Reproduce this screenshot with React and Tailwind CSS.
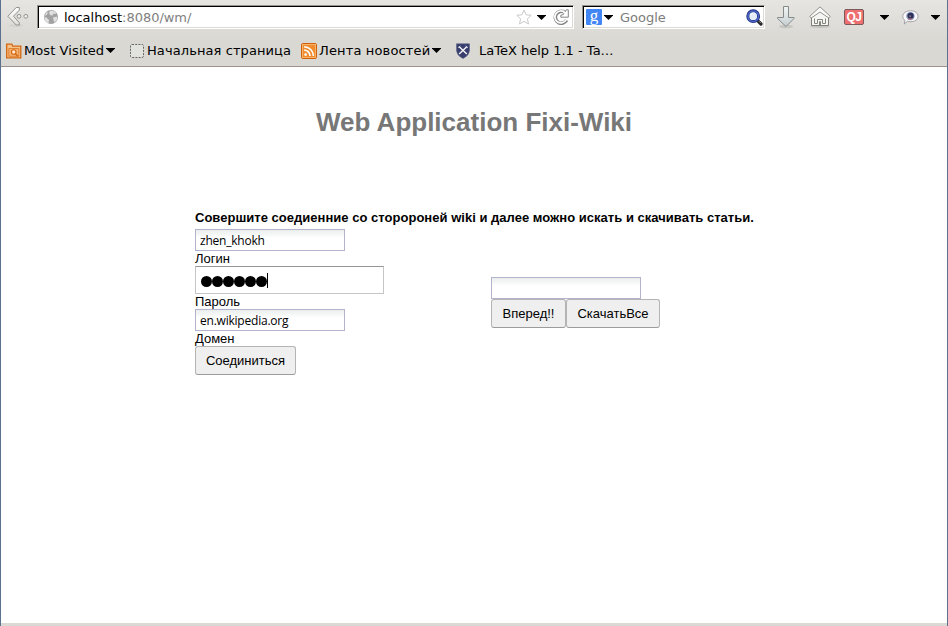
const Back = () => (
  <svg width="24" height="22" viewBox="0 0 24 22" className="shrink-0">
    <defs>
      <linearGradient id="back" x1="0" y1="0" x2="0" y2="1">
        <stop offset="0" stopColor="#fff" />
        <stop offset="1" stopColor="#ddddda" />
      </linearGradient>
    </defs>
    <ellipse cx="10" cy="19.5" rx="7" ry="1.5" fill="#cbcbc6" opacity=".6" />
    <path d="M1.8 10.2 10.2 1.5H13.3V4.2L7.5 10.2 13.3 16.6V19H10.2Z" fill="url(#back)" stroke="#92928f" strokeLinejoin="round" />
    <circle cx="13" cy="10.3" r="1.9" fill="#eee" stroke="#92928f" />
    <circle cx="19.8" cy="10.3" r="1.9" fill="#eee" stroke="#92928f" />
  </svg>
);

const Globe = () => (
  <svg width="16" height="16" viewBox="0 0 16 16" className="shrink-0">
    <circle cx="8" cy="8" r="7" fill="#a2a2a2" />
    <path d="M7 1.5 12.5 2.8 13 5 10.5 4.5 9.5 6.5 7.5 6.3 6 4.2Z M1.3 8 3.5 8.5 6 11 5.5 14.4 2.5 12.3Z M10 8.5 14 7.5 14.3 10.5 11.5 13.5 10.5 11Z M3.2 3.5 5 3.2 3.7 6 2 6.4Z" fill="#e0e0e0" />
  </svg>
);

const Star = () => (
  <svg width="16" height="16" viewBox="0 0 16 16" className="shrink-0">
    <path d="M8 1 10.1 5.8 15.2 6.3 11.4 9.8 12.5 15 8 12.3 3.5 15 4.6 9.8.8 6.3 5.9 5.8Z" fill="#fff" stroke="#cacaca" />
  </svg>
);

const Reload = () => (
  <svg width="16" height="16" viewBox="0 0 16 16" fill="none" className="shrink-0">
    <path d="M13.6 11.2A6 6 0 1 1 11.6 3.2" stroke="#858585" strokeWidth="3.6" />
    <path d="M13.1 10.9A6 6 0 1 1 11.6 3.2" stroke="#fff" strokeWidth="1.7" />
    <path d="M15.3.8V8.2H7.8V6.2L10.3 5.6 13.3.8Z" fill="#fff" stroke="#858585" />
    <path d="M10.5 3 12.8 4.4" stroke="#fff" strokeWidth="1.7" />
  </svg>
);

const Caret = () => (
  <svg width="9" height="5" viewBox="0 0 9 5" className="shrink-0">
    <path d="M0 0H9V.6L4.5 5 0 .6Z" fill="#000" />
  </svg>
);

const Lens = () => (
  <svg width="17" height="17" viewBox="0 0 17 17" className="shrink-0">
    <path d="M11 11 15 15" stroke="#28282c" strokeWidth="3.2" strokeLinecap="round" />
    <path d="M13 12.2 14.6 13.8" stroke="#999" strokeWidth="1" />
    <circle cx="7.2" cy="7.2" r="5.4" fill="#e3edf9" stroke="#20307f" strokeWidth="3" />
    <circle cx="7.2" cy="7.2" r="5.3" fill="none" stroke="#4c68c8" strokeWidth="1.5" />
    <path d="M4.5 6.5A3 3 0 0 1 8.5 4.3" stroke="#fff" fill="none" />
  </svg>
);

const Download = () => (
  <svg width="20" height="24" viewBox="0 0 20 24" className="shrink-0">
    <defs>
      <linearGradient id="down" x1="0" y1="0" x2="0" y2="1">
        <stop offset="0" stopColor="#f2f4f3" />
        <stop offset="1" stopColor="#c5ced0" />
      </linearGradient>
    </defs>
    <ellipse cx="10" cy="21.5" rx="7" ry="1.8" fill="#b8b8b3" opacity=".6" />
    <path d="M7.5 1.5H12.5V12.5H18V13.5L10 21.5 1.5 13.5V12.5H7.5Z" fill="url(#down)" stroke="#858b8b" strokeLinejoin="round" />
  </svg>
);

const Home = () => (
  <svg width="22" height="22" viewBox="0 0 22 22" className="shrink-0">
    <ellipse cx="11" cy="20.5" rx="10" ry="1.4" fill="#b8b8b3" opacity=".7" />
    <path d="M2.5 11 11 4 19.5 11V19.5H2.5Z" fill="#f5f5f3" stroke="#7f7f7b" />
    <path d="M5.5 12.5V17.5H8.5V13.5H13.5V17.5H16.5V12.5M10.5 19V15.5H11.5V19" fill="none" stroke="#858580" />
    <path d="M.8 10.3 11 .9 21.2 10.3 19.8 12 11 6 2.2 12Z" fill="#fafaf9" stroke="#92928d" strokeLinejoin="round" />
  </svg>
);

const Eye = () => (
  <svg width="17" height="16" viewBox="0 0 17 16" className="shrink-0">
    <path d="M8.5 1.8C13 1.8 16 4.1 16 7.3S13 12.7 8.5 12.7C7.3 12.7 6.2 12.6 5.3 12.3L2.4 15 2.8 11.2C1.5 10.1.8 8.8.8 7.3.8 4.1 4 1.8 8.5 1.8Z" fill="#fafaff" stroke="#a1a1a5" />
    <circle cx="8.4" cy="7.1" r="4.2" fill="#8791b0" />
    <circle cx="8.6" cy="6.8" r="3" fill="#29305c" />
    <path d="M6 9.8 8 10.2 10.5 9.5" stroke="#b06b6b" fill="none" />
    <circle cx="8.2" cy="7.2" r=".9" fill="#a07a85" />
  </svg>
);

const FolderSearch = () => (
  <svg width="16" height="16" viewBox="0 0 16 16" className="shrink-0">
    <path d="M.7 14.8V1.2H5.8L6.8 3.2H14.8V14.8Z" fill="#f8c28b" stroke="#d4660e" strokeWidth="1.3" />
    <path d="M2.8 13.3V5.5H12.9V13.3Z" fill="#f4b272" stroke="#df7c28" strokeWidth=".9" />
    <circle cx="7.7" cy="9" r="2.3" fill="#fde5ca" stroke="#d4660e" strokeWidth="1.1" />
    <path d="M9.4 10.8 12 13.3" stroke="#d4660e" strokeWidth="1.3" />
  </svg>
);

const Placeholder = () => (
  <svg width="14" height="14" viewBox="0 0 14 14" className="shrink-0">
    <rect x=".5" y=".5" width="13" height="13" rx="1.5" fill="#e2e2de" stroke="#666" strokeDasharray="2 1.2" />
  </svg>
);

const Feed = () => (
  <svg width="16" height="16" viewBox="0 0 16 16" className="shrink-0">
    <rect x=".5" y=".5" width="15" height="15" rx="1.5" fill="#f08c2c" stroke="#cf6009" />
    <rect x="1.5" y="1.5" width="13" height="13" fill="none" stroke="#f8b36c" />
    <circle cx="4.6" cy="11.6" r="1.4" fill="#fff" />
    <path d="M3.2 7.2A5.7 5.7 0 0 1 9 13M3.2 3.8A9.2 9.2 0 0 1 12.4 13" fill="none" stroke="#fff" strokeWidth="1.7" />
  </svg>
);

const Shield = () => (
  <svg width="14" height="16" viewBox="0 0 14 16" className="shrink-0">
    <path d="M.5.8H13.5V7.5Q13.2 12.5 7 15.5.8 12.5.5 7.5Z" fill="#393f6d" stroke="#5d6288" strokeWidth=".6" />
    <path d="M3 3.5 10.8 11M11 3.5 3.2 11" stroke="#f2f2f6" strokeWidth="1.5" />
    <path d="M2.3 4.8 4.3 2.8M9.7 2.8 11.7 4.8" stroke="#d8d9e4" strokeWidth="1" />
  </svg>
);

const fieldClass =
  "block h-[22px] w-[150px] border border-[#b3b3ce] bg-linear-to-b from-[#e9eeed] to-white to-40% pl-1 pt-px font-['Open_Sans','Noto_Sans',sans-serif] text-[12px] text-black outline-none";
const buttonClass =
  "h-[29px] rounded-[3px] border border-[#b4b4b4] border-b-[#9b9b9b] bg-[#efefef] text-[13px] leading-[27px] whitespace-nowrap";
const boxClass =
  "flex h-6 items-center border border-t-[#96948d] border-r-white border-b-white border-l-[#96948d] bg-white shadow-[inset_1px_1px_0_#000,inset_-1px_-1px_0_#dcdad5]";

function Toolbar() {
  return (
    <header className="h-[67px] border-b border-[#9f948b] bg-linear-to-b from-[#e6e5e2] to-[#d9d8d3] to-60% font-['DejaVu_Sans',sans-serif] text-[13px] text-black">
      <div className="flex h-[34px] items-center">
        <div className="ml-[5px] w-[31px]"><Back /></div>
        <div className={`${boxClass} w-[537px] pl-[5px]`}>
          <Globe />
          <span className="ml-[5px] pt-0.5 text-[13px] leading-4 tracking-[-0.03px]">localhost<span className="text-[#808080]">:8080/wm/</span></span>
          <div className="mr-1 ml-auto flex items-center"><Star /><span className="mr-[7px] ml-[5px]"><Caret /></span><Reload /></div>
        </div>
        <div className={`${boxClass} ml-2 w-[183px] pl-[3px]`}>
          <span className="flex h-4 w-4 items-center justify-center rounded-[1px] bg-[#4285f4] pb-[3px] font-['Liberation_Serif',serif] text-[17px] leading-4 text-white">g</span>
          <span className="ml-[2px]"><Caret /></span>
          <span className="ml-[7px] pt-0.5 text-[13px] leading-4 text-[#7c7c7c]">Google</span>
          <span className="mr-px ml-auto"><Lens /></span>
        </div>
        <span className="ml-[11px]"><Download /></span>
        <span className="ml-[13px]"><Home /></span>
        <span className="ml-[13px] h-4 w-5 rounded-[2px] border border-[#7c5a5a] bg-[#ed6f70] text-center font-['Liberation_Sans',sans-serif] text-[12px] leading-[14px] font-bold tracking-[-0.5px] text-white">QJ</span>
        <span className="ml-4"><Caret /></span>
        <span className="ml-[13px]"><Eye /></span>
        <span className="ml-3"><Caret /></span>
      </div>
      <nav className="flex h-8 items-center pt-px pl-[5px] whitespace-nowrap">
        <FolderSearch />
        <span className="ml-[2px] w-[82px] tracking-[0.09px]">Most Visited</span>
        <Caret />
        <span className="ml-[15px]"><Placeholder /></span>
        <span className="ml-[3px] w-[154px] tracking-[0.09px]">Начальная страница</span>
        <Feed />
        <span className="ml-[2px] w-[113px] tracking-[0.15px]">Лента новостей</span>
        <Caret />
        <span className="ml-[15px]"><Shield /></span>
        <span className="ml-[9px]">LaTeX help 1.1 - Ta…</span>
      </nav>
    </header>
  );
}

export default function App() {
  return (
    <div className="flex h-[626px] w-[948px] flex-col overflow-hidden border-x border-[#5b728e] bg-white font-['Liberation_Sans',sans-serif] text-[13px] text-black [&_svg]:block">
      <Toolbar />
      <main className="flex-1">
        <h1 className="mt-10 text-center text-[26px] leading-[30px] font-bold text-[#777]">Web Application Fixi-Wiki</h1>
        <div className="mt-[73px] ml-[194px]">
          <p className="h-[19px] text-[13px] leading-[15px] font-bold tracking-[0.022px] whitespace-nowrap">Совершите соедиенние со сторороней wiki и далее можно искать и скачивать статьи.</p>
          <div className="flex">
            <form className="w-[296px]">
              <input className={`${fieldClass} tracking-[-0.22px]`} defaultValue="zhen_khokh" />
              <label className="block h-[15px] leading-[15px]">Логин</label>
              <div className="flex h-7 w-[189px] items-center border border-[#c5c5c5] border-t-[#949494] pl-[5px]">
                <div className="flex pt-[3px]">
                  {[0, 1, 2, 3, 4, 5].map((dot) => <span key={dot} className="h-[11px] w-[11px] rounded-full bg-black" />)}
                </div>
                <span className="h-[15px] w-px bg-black" />
              </div>
              <label className="block h-[15px] leading-[15px]">Пароль</label>
              <input className={`${fieldClass} tracking-[-0.22px]`} defaultValue="en.wikipedia.org" />
              <label className="block h-[15px] leading-[15px]">Домен</label>
              <button type="button" className={`${buttonClass} w-[101px]`}>Соединиться</button>
            </form>
            <form className="mt-12">
              <input className={fieldClass} />
              <div className="flex">
                <button type="button" className={`${buttonClass} w-[75px]`}>Вперед!!</button>
                <button type="button" className={`${buttonClass} w-[94px]`}>СкачатьВсе</button>
              </div>
            </form>
          </div>
        </div>
      </main>
      <footer className="h-[3px] bg-[#dad9d4]" />
    </div>
  );
}
